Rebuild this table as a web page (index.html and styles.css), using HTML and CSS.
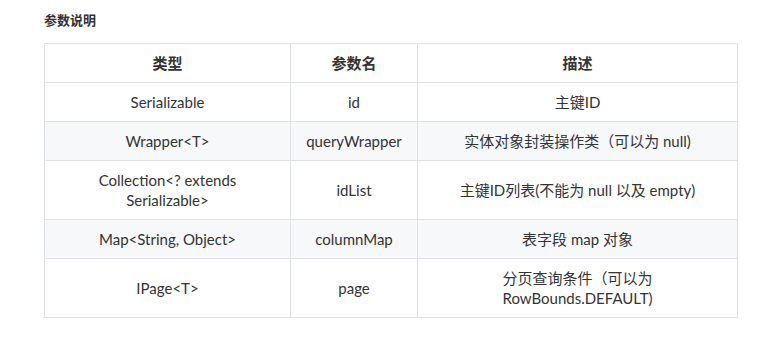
FILE: index.html
```html
<!DOCTYPE html>
<html lang="zh">
<head>
<meta charset="utf-8">
<link rel="stylesheet" href="styles.css">
</head>
<body>
<div class="page">
  <h4 class="title">参数说明</h4>
  <table class="params">
    <colgroup>
      <col class="c1"><col class="c2"><col class="c3">
    </colgroup>
    <thead>
      <tr><th>类型</th><th>参数名</th><th>描述</th></tr>
    </thead>
    <tbody>
      <tr><td>Serializable</td><td>id</td><td>主键ID</td></tr>
      <tr><td>Wrapper&lt;T&gt;</td><td>queryWrapper</td><td>实体对象封装操作类（可以为 null)</td></tr>
      <tr><td>Collection&lt;? extends Serializable&gt;</td><td>idList</td><td>主键ID列表(不能为 null 以及 empty)</td></tr>
      <tr><td>Map&lt;String, Object&gt;</td><td>columnMap</td><td>表字段 map 对象</td></tr>
      <tr><td>IPage&lt;T&gt;</td><td>page</td><td>分页查询条件（可以为 RowBounds.DEFAULT)</td></tr>
    </tbody>
  </table>
</div>
</body>
</html>
```
FILE: styles.css
```css
html, body {
  margin: 0;
  padding: 0;
  background: #fff;
}
.page {
  padding: 12px 0 0 44px;
  font-family: "Lato", "Noto Sans CJK SC", sans-serif;
  color: #333;
}
.title {
  margin: 0 0 14px 0;
  font-size: 13px;
  line-height: 17px;
  font-weight: 700;
}
.params {
  border-collapse: collapse;
  table-layout: fixed;
  width: 693px;
  font-size: 15px;
  line-height: 20px;
}
.c1 { width: 246px; }
.c2 { width: 127px; }
.c3 { width: 320px; }
.params th, .params td {
  border: 1px solid #dfe2e5;
  padding: 9px 13px;
  text-align: center;
  vertical-align: middle;
}
.params th {
  font-weight: 700;
}
.params tbody tr:nth-child(even) {
  background: #f6f8fa;
}
```
